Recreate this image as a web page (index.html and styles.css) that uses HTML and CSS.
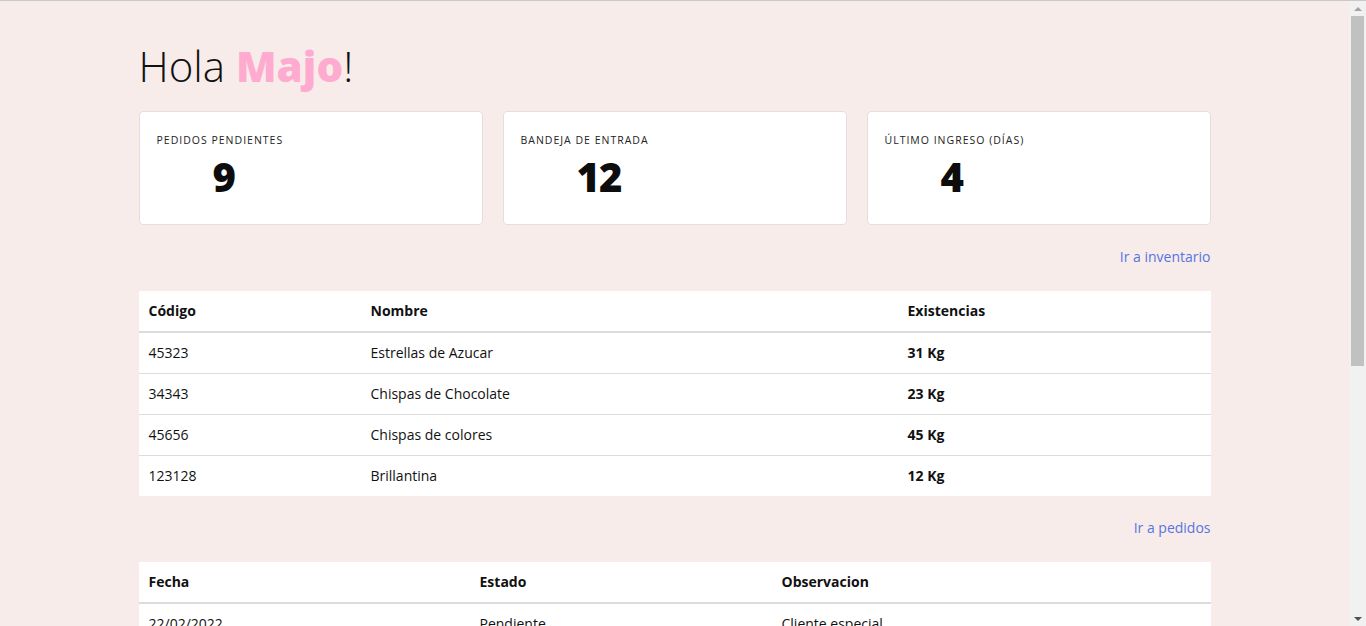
FILE: index.html
```html
<!DOCTYPE html>
<html lang="es">
<head>
<meta charset="utf-8">
<title>Inicio</title>
<link rel="stylesheet" href="styles.css">
</head>
<body>
<div class="window">
<div class="viewport">
<main class="page">
  <h1 class="greeting">Hola <span class="name">Majo</span>!</h1>

  <section class="cards">
    <div class="card">
      <div class="card-label">Pedidos pendientes</div>
      <div class="card-value">9</div>
    </div>
    <div class="card">
      <div class="card-label">Bandeja de entrada</div>
      <div class="card-value">12</div>
    </div>
    <div class="card">
      <div class="card-label">Último ingreso (días)</div>
      <div class="card-value">4</div>
    </div>
  </section>

  <p class="more"><a href="#" class="more-link">Ir a inventario</a></p>

  <table class="data inventory">
    <thead>
      <tr><th class="c1">Código</th><th class="c2">Nombre</th><th>Existencias</th></tr>
    </thead>
    <tbody>
      <tr><td>45323</td><td>Estrellas de Azucar</td><td class="strong">31 Kg</td></tr>
      <tr><td>34343</td><td>Chispas de Chocolate</td><td class="strong">23 Kg</td></tr>
      <tr><td>45656</td><td>Chispas de colores</td><td class="strong">45 Kg</td></tr>
      <tr><td>123128</td><td>Brillantina</td><td class="strong">12 Kg</td></tr>
    </tbody>
  </table>

  <p class="more"><a href="#" class="more-link">Ir a pedidos</a></p>

  <table class="data orders">
    <thead>
      <tr><th class="o1">Fecha</th><th class="o2">Estado</th><th>Observacion</th></tr>
    </thead>
    <tbody>
      <tr><td>22/02/2022</td><td>Pendiente</td><td>Cliente especial</td></tr>
    </tbody>
  </table>
</main>
</div>
<div class="scrollbar" aria-hidden="true">
  <div class="sb-btn"><span class="arrow-up"></span></div>
  <div class="sb-thumb"></div>
  <div class="sb-track"></div>
  <div class="sb-btn"><span class="arrow-down"></span></div>
</div>
</div>
</body>
</html>
```

FILE: styles.css
```css
html,
body {
  margin: 0;
  height: 100%;
  overflow: hidden;
  background: #f8eceb;
}
body {
  border-top: 1px solid #c9c9c9;
  box-sizing: border-box;
  font-family: "Open Sans", "Liberation Sans", sans-serif;
  color: #111;
}
.window {
  display: flex;
  height: 100%;
}
.viewport {
  flex: 1;
  min-width: 0;
  overflow: hidden;
}
.scrollbar {
  width: 17px;
  flex: none;
  display: flex;
  flex-direction: column;
  background: #f1f1f1;
}
.sb-btn {
  height: 15px;
  display: flex;
  align-items: center;
  justify-content: center;
}
.arrow-up {
  width: 0;
  height: 0;
  border-left: 4px solid transparent;
  border-right: 4px solid transparent;
  border-bottom: 4px solid #a3a3a3;
}
.arrow-down {
  width: 0;
  height: 0;
  border-left: 4px solid transparent;
  border-right: 4px solid transparent;
  border-top: 4px solid #505050;
}
.sb-thumb {
  height: 350px;
  margin: 0 2px;
  background: #c1c1c1;
}
.sb-track {
  flex: 1;
}
.page {
  max-width: 1072px;
  margin: 0 auto;
  padding: 0 0 80px;
}
.greeting {
  margin: 0 0 20px;
  padding-top: 40px;
  font-size: 42px;
  line-height: 50px;
  font-weight: 300;
}
.name {
  color: #ffabd0;
  font-weight: 800;
}
.cards {
  display: flex;
  gap: 20px;
}
.card {
  flex: 1;
  height: 114px;
  box-sizing: border-box;
  background: #fff;
  border: 1px solid #e3dfdf;
  border-radius: 4px;
  padding: 21px 17px 0;
}
.card-label {
  font-size: 10.5px;
  line-height: 14px;
  text-transform: uppercase;
  letter-spacing: 1px;
  color: #222;
}
.card-value {
  margin: 8px 0 0 56px;
  font-size: 40px;
  line-height: 44px;
  font-weight: 800;
  letter-spacing: -1px;
  color: #0d0d0d;
}
.more {
  margin: 22px 0 24px;
  text-align: right;
  font-size: 14px;
  line-height: 20px;
}
.more-link {
  color: #5674e0;
  text-decoration: none;
}
.data {
  width: 100%;
  border-collapse: collapse;
  background: #fff;
  font-size: 14px;
}
.data th,
.data td {
  text-align: left;
  padding: 11px 10px;
  line-height: 18px;
  font-weight: 400;
}
.data th {
  font-weight: 700;
  border-bottom: 2px solid #dcdcdc;
}
.data td {
  border-top: 1px solid #dcdcdc;
}
.data tbody tr:first-child td {
  border-top: 0;
}
.data td.strong {
  font-weight: 700;
}
.c1 { width: 202px; }
.c2 { width: 517px; }
.o1 { width: 311px; }
.o2 { width: 282px; }
.orders {
  margin-top: 1px;
}
```
